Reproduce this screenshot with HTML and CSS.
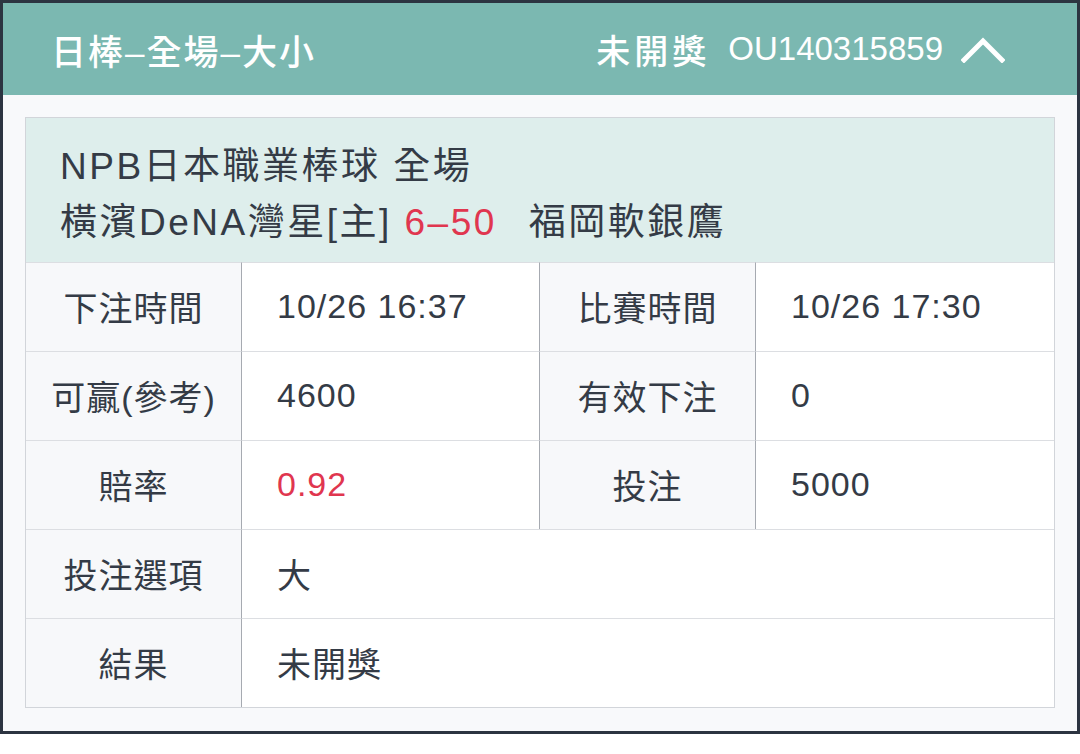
FILE: index.html
```html
<!DOCTYPE html>
<html lang="zh-Hant">
<head>
<meta charset="utf-8">
<title>注單詳情</title>
<link rel="stylesheet" href="styles.css">
</head>
<body>
<div class="frame">
  <header class="header">
    <div class="title">日棒–全場–大小</div>
    <div class="head-right">
      <span class="status">未開獎</span>
      <span class="order">OU140315859</span>
      <svg class="chevron" width="44" height="26" viewBox="0 0 44 26"><polyline points="3,23 22,4 41,23" fill="none" stroke="#fff" stroke-width="5" stroke-linecap="square"/></svg>
    </div>
  </header>
  <main class="body">
    <section class="card">
      <div class="info">
        <div class="line">NPB日本職業棒球 全場</div>
        <div class="line">橫濱DeNA灣星[主] <span class="red">6–50</span><span class="away">福岡軟銀鷹</span></div>
      </div>
      <div class="grid">
        <div class="cell label">下注時間</div>
        <div class="cell value">10/26 16:37</div>
        <div class="cell label">比賽時間</div>
        <div class="cell value last">10/26 17:30</div>

        <div class="cell label">可贏(參考)</div>
        <div class="cell value">4600</div>
        <div class="cell label">有效下注</div>
        <div class="cell value last">0</div>

        <div class="cell label">賠率</div>
        <div class="cell value red">0.92</div>
        <div class="cell label">投注</div>
        <div class="cell value last">5000</div>

        <div class="cell label">投注選項</div>
        <div class="cell value wide last">大</div>

        <div class="cell label">結果</div>
        <div class="cell value wide last">未開獎</div>
      </div>
    </section>
  </main>
</div>
</body>
</html>
```

FILE: styles.css
```css
* { box-sizing: border-box; }
html, body { margin: 0; padding: 0; background: #ffffff; }
body {
  font-family: "Liberation Sans", "Noto Sans CJK TC", sans-serif;
  color: #343b46;
}
.frame {
  width: 1080px;
  height: 734px;
  border: 3px solid #2c3441;
  background: #f8f9fb;
  display: flex;
  flex-direction: column;
}
.header {
  height: 92px;
  background: #7bb8b1;
  color: #ffffff;
  display: flex;
  align-items: center;
  justify-content: space-between;
  padding: 0 72px 0 48px;
  font-weight: 500;
}
.title {
  font-size: 35px;
  letter-spacing: 2px;
}
.head-right {
  display: flex;
  align-items: center;
}
.status { font-size: 34px; letter-spacing: 4px; margin-right: 18px; }
.order { font-size: 33px; font-weight: 400; letter-spacing: 0; }
.chevron { margin-left: 18px; margin-top: 2px; display: block; }
.body {
  flex: 1;
  padding: 22px 22px 22px 22px;
}
.card {
  border: 1px solid #d2d5da;
  background: #ffffff;
}
.info {
  height: 144px;
  background: #deeeec;
  padding: 21px 0 0 34px;
  font-size: 37px;
  letter-spacing: 2.5px;
  line-height: 56px;
}
.red { color: #e0364f; }
.away { margin-left: 32px; }
.grid {
  display: grid;
  grid-template-columns: 216px 298px 216px 1fr;
  grid-auto-rows: 89px;
}
.cell {
  border-top: 1px solid #dcdee2;
  border-right: 1px solid #a6aab1;
  display: flex;
  align-items: center;
  font-size: 34px;
  letter-spacing: 1px;
  padding-bottom: 2px;
}
.label {
  background: #f7f8fa;
  justify-content: center;
}
.value {
  background: #ffffff;
  padding-left: 35px;
}
.last { border-right: none; }
.wide { grid-column: span 3; }
```
